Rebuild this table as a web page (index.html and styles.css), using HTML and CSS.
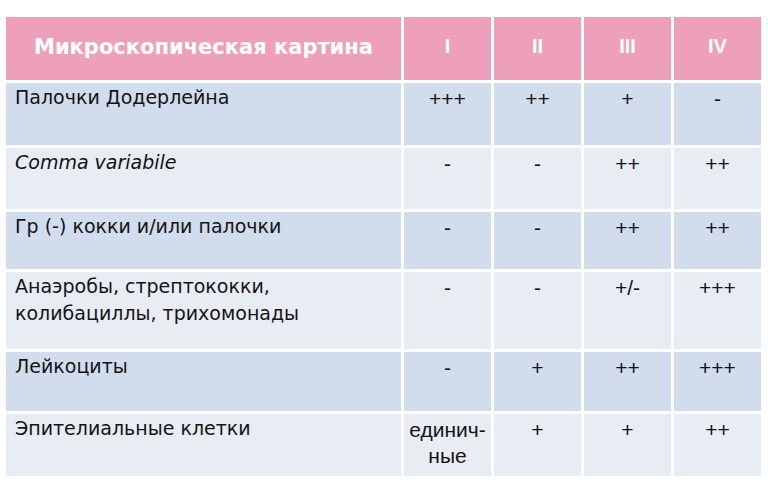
FILE: index.html
```html
<!DOCTYPE html>
<html lang="ru">
<head>
<meta charset="utf-8">
<link rel="stylesheet" href="styles.css">
</head>
<body>
<table class="grid">
  <colgroup>
    <col class="c-name"><col class="c-val"><col class="c-val"><col class="c-val"><col class="c-val">
  </colgroup>
  <thead>
    <tr class="head">
      <th class="name-h">Микроскопическая картина</th>
      <th>I</th><th>II</th><th>III</th><th>IV</th>
    </tr>
  </thead>
  <tbody>
    <tr class="dark r1">
      <td class="name">Палочки Додерлейна</td><td>+++</td><td>++</td><td>+</td><td>-</td>
    </tr>
    <tr class="light r2">
      <td class="name"><i>Comma variabile</i></td><td>-</td><td>-</td><td>++</td><td>++</td>
    </tr>
    <tr class="dark r3">
      <td class="name">Гр (-) кокки и/или палочки</td><td>-</td><td>-</td><td>++</td><td>++</td>
    </tr>
    <tr class="light r4">
      <td class="name">Анаэробы, стрептококки,<br>колибациллы, трихомонады</td><td>-</td><td>-</td><td>+/-</td><td>+++</td>
    </tr>
    <tr class="dark r5">
      <td class="name">Лейкоциты</td><td>-</td><td>+</td><td>++</td><td>+++</td>
    </tr>
    <tr class="light r6">
      <td class="name">Эпителиальные клетки</td><td>единич-<br>ные</td><td>+</td><td>+</td><td>++</td>
    </tr>
  </tbody>
</table>
</body>
</html>
```
FILE: styles.css
```css
html, body {
  margin: 0;
  background: #ffffff;
}
body {
  padding: 14px 0 0 3px;
  font-family: "Liberation Sans", Arial, sans-serif;
}
.grid {
  border-collapse: separate;
  border-spacing: 3px;
  table-layout: fixed;
  width: 757px;
  background: #ffffff;
}
.c-name { width: 395px; }
.c-val { width: 87px; }
.grid th {
  background: #ee9fb9;
  color: #ffffff;
  font-weight: bold;
  font-size: 20px;
  height: 59px;
  padding: 0 0 4px 0;
  vertical-align: middle;
  text-align: center;
}
.grid th.name-h {
  font-family: "DejaVu Sans", "Liberation Sans", sans-serif;
  font-size: 21px;
}
.grid td {
  font-size: 21px;
  line-height: 26px;
  color: #141414;
  vertical-align: top;
  text-align: center;
  padding: 3px 0 0 0;
}
.grid td.name {
  font-family: "DejaVu Sans", "Liberation Sans", sans-serif;
  font-size: 19px;
  line-height: 27px;
  text-align: left;
  padding: 1px 0 0 9px;
}
.dark td { background: #d1dcec; }
.light td { background: #e8ecf3; }
.r1 td { height: 61px; }
.r2 td { height: 60px; }
.r3 td { height: 56px; }
.r4 td { height: 76px; }
.r5 td { height: 58px; }
.r6 td { height: 61px; }
.r1 td.name, .r2 td.name, .r3 td.name, .r4 td.name, .r5 td.name, .r6 td.name {
  padding-top: 1px;
}
.r1 td:not(.name) { height: 59px; }
.r2 td:not(.name) { height: 58px; }
.r3 td:not(.name) { height: 54px; }
.r4 td:not(.name) { height: 74px; }
.r5 td:not(.name) { height: 56px; }
.r6 td:not(.name) { height: 59px; }
```
